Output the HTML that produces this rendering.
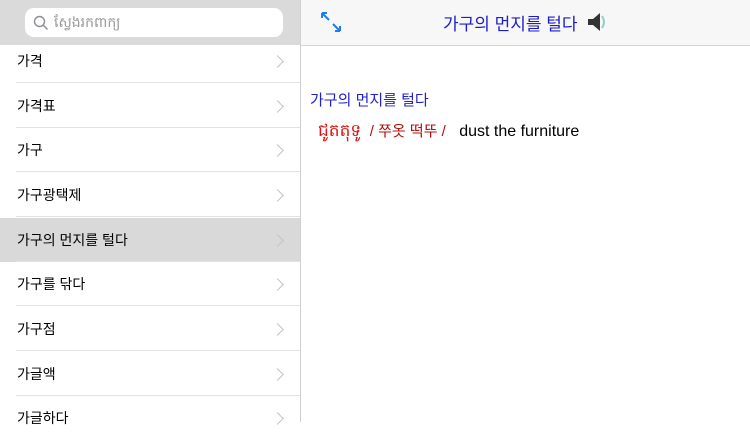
<!DOCTYPE html><html><head><meta charset="utf-8"><style>
body{margin:0;width:750px;height:422px;overflow:hidden;background:#fff;font-family:"Liberation Sans","Noto Sans CJK KR",sans-serif;position:relative}
.lh{position:absolute;left:0;top:0;width:300px;height:45px;background:#dadada}
.sb{position:absolute;left:25px;top:8px;width:258px;height:29px;background:#fff;border-radius:9px;color:#999;font-size:14px;line-height:29px}
.rh{position:absolute;left:301px;top:0;width:449px;height:45px;background:#f7f7f7;border-bottom:1px solid #d6d6d6}
.div{position:absolute;left:300px;top:0;width:1px;height:422px;background:#cfcfcf}
.row{position:absolute;left:0;width:300px;height:44px;font-size:14px;line-height:44px;color:#000}
.row span{position:absolute;left:17px}
.row i{position:absolute;right:0;left:16px;bottom:0;height:1px;background:#e2e2e2}
.ch{position:absolute;left:273px;top:18px;width:8px;height:8px;border-top:1.5px solid #c4c4c8;border-right:1.5px solid #c4c4c8;transform:rotate(45deg)}
</style></head><body>
<div class="lh"><div class="sb"><svg style="position:absolute;left:8px;top:7px" width="16" height="16"><circle cx="6.5" cy="6.5" r="5" fill="none" stroke="#8e8e93" stroke-width="1.4"/><line x1="10" y1="10" x2="14.5" y2="14.5" stroke="#8e8e93" stroke-width="1.5"/></svg><span style="position:absolute;left:29px">ស្វែងរកពាក្យ</span></div></div>
<div class="rh"><svg style="position:absolute;left:19px;top:11px" width="24" height="24" fill="none" stroke="#1e7cf0" stroke-width="2"><path d="M2 2l7 7M2 2h5M2 2v5"/><path d="M20 20l-7-7M20 20h-5M20 20v-5"/></svg>
<div style="position:absolute;left:142px;top:10px;font-size:17px;color:#1c1ccf">가구의 먼지를 털다</div>
<svg style="position:absolute;left:284px;top:11px" width="22" height="22"><path d="M3 8h5l7-6v18l-7-6H3z" fill="#333"/><path d="M17 5q4 6 0 12" stroke="#9cc" stroke-width="2" fill="none"/></svg></div>
<div class="div"></div>
<div class="row" style="top:39px"><span>가격</span><b class="ch"></b><i></i></div>
<div class="row" style="top:84px"><span>가격표</span><b class="ch"></b><i></i></div>
<div class="row" style="top:128px"><span>가구</span><b class="ch"></b><i></i></div>
<div class="row" style="top:173px"><span>가구광택제</span><b class="ch"></b><i></i></div>
<div class="row" style="top:218px;background:#d9d9d9"><span>가구의 먼지를 털다</span><b class="ch"></b><i></i></div>
<div class="row" style="top:262px"><span>가구를 닦다</span><b class="ch"></b><i></i></div>
<div class="row" style="top:307px"><span>가구점</span><b class="ch"></b><i></i></div>
<div class="row" style="top:352px"><span>가글액</span><b class="ch"></b><i></i></div>
<div class="row" style="top:396px"><span>가글하다</span><b class="ch"></b></div>
<div style="position:absolute;left:310px;top:89px;font-size:15px;color:#2222cc">가구의 먼지를 털다</div>
<div style="position:absolute;left:318px;top:120px;font-size:16px;white-space:nowrap"><span style="color:#e01010;font-size:17px">ជូតតុទូ</span> <span style="color:#b01010;font-size:15px">&nbsp;/ 쭈옷 떡뚜 /</span> &nbsp;&nbsp;<span style="color:#000">dust the furniture</span></div>
</body></html>
